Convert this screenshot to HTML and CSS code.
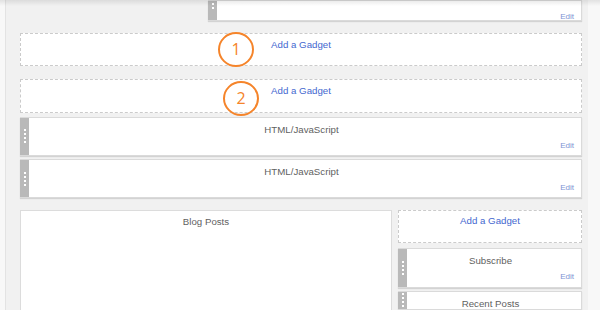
FILE: index.html
```html
<!DOCTYPE html>
<html>
<head>
<meta charset="utf-8">
<link rel="stylesheet" href="styles.css">
</head>
<body>
<div class="page">
  <div class="panel">
    <div class="widget widget-top">
      <div class="handle"><span class="dots"></span></div>
      <div class="body">
        <div class="title"></div>
        <a class="edit">Edit</a>
      </div>
    </div>
    <div class="add add-1"><a>Add a Gadget</a></div>
    <div class="add add-2"><a>Add a Gadget</a></div>
    <div class="widget w-html1">
      <div class="handle"><span class="dots"></span></div>
      <div class="body">
        <div class="title">HTML/JavaScript</div>
        <a class="edit">Edit</a>
      </div>
    </div>
    <div class="widget w-html2">
      <div class="handle"><span class="dots"></span></div>
      <div class="body">
        <div class="title">HTML/JavaScript</div>
        <a class="edit">Edit</a>
      </div>
    </div>
    <div class="row">
      <div class="main">
        <div class="title">Blog Posts</div>
      </div>
      <div class="side">
        <div class="add add-side"><a>Add a Gadget</a></div>
        <div class="widget w-sub">
          <div class="handle"><span class="dots"></span></div>
          <div class="body">
            <div class="title">Subscribe</div>
            <a class="edit">Edit</a>
          </div>
        </div>
        <div class="widget w-recent">
          <div class="handle"><span class="dots"></span></div>
          <div class="body">
            <div class="title">Recent Posts</div>
          </div>
        </div>
      </div>
    </div>
    <div class="marker m1">1</div>
    <div class="marker m2">2</div>
  </div>
  <div class="top-shadow"></div>
</div>
</body>
</html>
```

FILE: styles.css
```css
* { box-sizing: border-box; }
html, body { margin: 0; padding: 0; }
body {
  width: 600px;
  height: 310px;
  overflow: hidden;
  background: #f8f8f8;
  font-family: "Liberation Sans", Arial, sans-serif;
}
.page {
  position: relative;
  height: 310px;
  padding-left: 5px;
}
.panel {
  position: relative;
  width: 583px;
  height: 310px;
  background: #f1f1f1;
  border-left: 1px solid #e3e3e3;
  padding: 0 6px 0 14px;
  display: flex;
  flex-direction: column;
}
.top-shadow {
  position: absolute;
  left: 0; top: 0; right: 0;
  height: 6px;
  background: linear-gradient(rgba(0,0,0,0.09), rgba(0,0,0,0));
}
.widget {
  display: flex;
  background: #fff;
  border: 1px solid #dadada;
  border-left: none;
  box-shadow: 0 1px 1px rgba(0,0,0,0.12);
}
.handle {
  width: 9px;
  flex: none;
  background: #b9b9b9;
  display: flex;
  align-items: center;
  justify-content: center;
}
.dots {
  width: 2px;
  height: 14px;
  background: repeating-linear-gradient(#fff 0 2px, transparent 2px 4px);
}
.body {
  flex: 1;
  display: flex;
  flex-direction: column;
  align-items: center;
  padding: 6px 7px 0 0;
}
.title {
  font-size: 9.7px;
  color: #5f5f5f;
  line-height: 11px;
}
.edit {
  align-self: flex-end;
  font-size: 8px;
  color: #7d93d3;
  line-height: 9px;
  margin-top: 6px;
}
.widget-top {
  margin-left: 188px;
  height: 21px;
}
.widget-top .handle { align-items: flex-start; padding-top: 2px; }
.widget-top .dots { height: 8px; }
.widget-top .body { padding-top: 5px; }
.widget-top .title { height: 0; }
.add {
  border: 1px dashed #cbcbcb;
  background: #fff;
  text-align: center;
  padding-top: 5px;
  font-size: 9.7px;
  line-height: 11px;
}
.add a { color: #4467cf; }
.add-1 { margin-top: 12px; height: 33px; }
.add-2 { margin-top: 13px; height: 34px; }
.w-html1 { margin-top: 4px; height: 40px; }
.w-html2 { margin-top: 3px; height: 39px; }
.row {
  margin-top: 12px;
  display: flex;
  gap: 6px;
  flex: 1;
}
.main {
  width: 372px;
  background: #fff;
  border: 1px solid #dcdcdc;
  border-bottom: none;
  text-align: center;
  padding-top: 5px;
}
.side {
  flex: 1;
  display: flex;
  flex-direction: column;
}
.add-side { height: 33px; padding-top: 4px; }
.w-sub { margin-top: 5px; height: 40px; }
.w-recent { margin-top: 3px; flex: 1; }
.marker {
  position: absolute;
  width: 36px;
  height: 35px;
  border: 2px solid #f5842a;
  border-radius: 50%;
  color: #f5842a;
  font-family: "Open Sans", "Liberation Sans", sans-serif;
  font-size: 16px;
  line-height: 30px;
  text-align: center;
}
.m1 { left: 212px; top: 32px; }
.m2 { left: 217px; top: 81px; }
```
